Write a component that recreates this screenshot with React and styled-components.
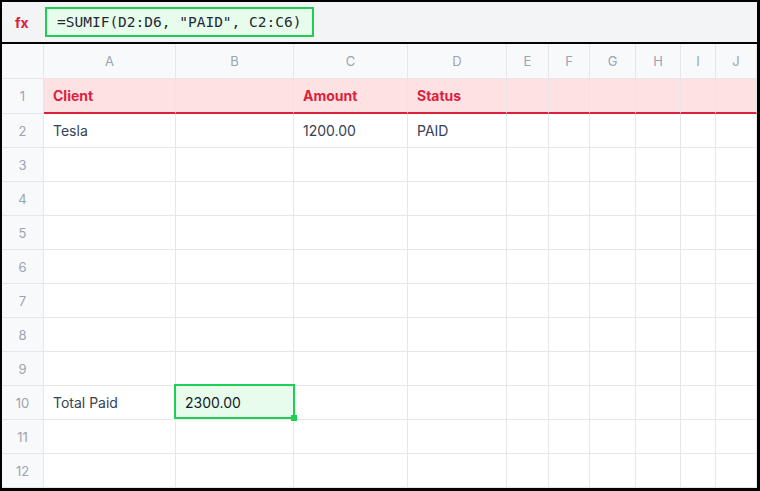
import React from 'react'
import styled, { createGlobalStyle } from 'styled-components'

const GlobalStyle = createGlobalStyle`
  html, body {
    margin: 0;
    padding: 0;
    background: #fff;
  }
  body {
    font-family: Inter, "Noto Sans", "Liberation Sans", sans-serif;
  }
  * {
    box-sizing: border-box;
  }
`

const COLUMNS = ['A', 'B', 'C', 'D', 'E', 'F', 'G', 'H', 'I', 'J']
const WIDTHS = [42, 132, 118, 114, 99, 42, 41, 46, 45, 35, 41]
const ROW_COUNT = 12

const DATA = {
  1: ['Client', '', 'Amount', 'Status'],
  2: ['Tesla', '', '1200.00', 'PAID'],
  10: ['Total Paid', '2300.00'],
}

const SELECTED = { row: 10, col: 1 }

const Frame = styled.div`
  width: 760px;
  height: 491px;
  border: 2px solid #000;
  border-right-width: 3px;
  border-bottom-width: 3px;
  display: flex;
  flex-direction: column;
  background: #fff;
  overflow: hidden;
`

const FormulaBar = styled.div`
  height: 42px;
  flex: none;
  display: flex;
  align-items: center;
  gap: 16px;
  padding-left: 13px;
  background: #f3f4f6;
  border-bottom: 2px solid #000;
`

const FxLabel = styled.span`
  color: #dc1f3c;
  font-weight: 700;
  font-size: 14px;
  width: 14px;
`

const FormulaBox = styled.div`
  height: 30px;
  display: flex;
  align-items: center;
  padding: 0 11px 0 10px;
  border: 2px solid #1fcf55;
  background: #e8fcec;
  color: #1f2937;
  font-family: "DejaVu Sans Mono", "Liberation Mono", monospace;
  font-size: 14.5px;
  white-space: pre;
`

const Grid = styled.div`
  display: grid;
  grid-template-columns: ${WIDTHS.map((w) => `${w}px`).join(' ')};
  grid-template-rows: 35px 35px repeat(${ROW_COUNT - 1}, 34px);
`

const HeadCell = styled.div`
  display: flex;
  align-items: center;
  justify-content: center;
  background: #f8f9fb;
  color: #9ca3af;
  font-size: 13px;
  border-right: 1px solid #e5e7eb;
  border-bottom: 1px solid #e5e7eb;
`

const Cell = styled.div`
  position: relative;
  display: flex;
  align-items: center;
  padding: 0 9px;
  font-size: 14px;
  white-space: nowrap;
  color: ${(p) => (p.$header ? '#dc1f3c' : '#374151')};
  font-weight: ${(p) => (p.$header ? 700 : 400)};
  background: ${(p) => {
    if (p.$selected) return '#e8fcec'
    if (p.$header) return '#fde1e3'
    return '#fff'
  }};
  border-right: 1px solid #e5e7eb;
  border-bottom: ${(p) => (p.$header ? '2px solid #dc1f3c' : '1px solid #e5e7eb')};
  ${(p) => p.$selected && 'color: #111827; z-index: 1;'}
`

const Selection = styled.div`
  position: absolute;
  inset: -2px -2px 0 -2px;
  border: 2px solid #1fcf55;
  pointer-events: none;
`

const FillHandle = styled.div`
  position: absolute;
  right: -4px;
  bottom: -4px;
  width: 6px;
  height: 6px;
  background: #1fcf55;
`

const App = () => {
  const rows = Array.from({ length: ROW_COUNT }, (_, i) => i + 1)

  return (
    <>
      <GlobalStyle />
      <Frame>
        <FormulaBar>
          <FxLabel>fx</FxLabel>
          <FormulaBox>=SUMIF(D2:D6, "PAID", C2:C6)</FormulaBox>
        </FormulaBar>
        <Grid>
          <HeadCell />
          {COLUMNS.map((c) => (
            <HeadCell key={c}>{c}</HeadCell>
          ))}
          {rows.map((r) => (
            <React.Fragment key={r}>
              <HeadCell>{r}</HeadCell>
              {COLUMNS.map((c, ci) => {
                const selected = SELECTED.row === r && SELECTED.col === ci
                const value = (DATA[r] && DATA[r][ci]) || ''
                return (
                  <Cell key={c} $header={r === 1} $selected={selected}>
                    {value}
                    {selected && (
                      <Selection>
                        <FillHandle />
                      </Selection>
                    )}
                  </Cell>
                )
              })}
            </React.Fragment>
          ))}
        </Grid>
      </Frame>
    </>
  )
}

export default App
